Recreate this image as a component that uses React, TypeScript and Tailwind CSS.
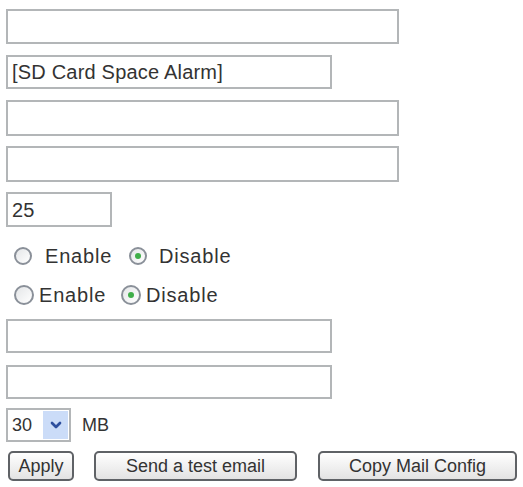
import { ChevronDown } from 'lucide-react'

const font = { fontFamily: '"Liberation Sans", Arial, sans-serif' }

function TextBox({ w, h = 'h-[35px]', value = '' }: { w: string; h?: string; value?: string }) {
  return (
    <div
      className={`${w} ${h} flex items-center border-2 border-[#b3b6b8] bg-white px-[4px] text-[20px] tracking-[0.2px] text-[#333]`}
    >
      {value}
    </div>
  )
}

function Radio({ checked, big }: { checked?: boolean; big?: boolean }) {
  return (
    <span
      className={`flex ${big ? 'size-[20px]' : 'size-[18px]'} items-center justify-center rounded-full border-2 border-[#8a9099] bg-gradient-to-br from-[#e4e6e8] to-white`}
    >
      {checked && <span className="size-[6px] rounded-full bg-[#3fae49]" />}
    </span>
  )
}

function RadioRow({ wide }: { wide?: boolean }) {
  return (
    <div className="flex items-center text-[20px] tracking-[0.8px] text-[#333]">
      <span className={wide ? 'ml-[8px]' : 'ml-[8px]'}>
        <Radio big={!wide} />
      </span>
      <span className={wide ? 'ml-[13px]' : 'ml-[5px]'}>Enable</span>
      <span className={wide ? 'ml-[17px]' : 'ml-[15px]'}>
        <Radio checked big={!wide} />
      </span>
      <span className={wide ? 'ml-[12px]' : 'ml-[5px]'}>Disable</span>
    </div>
  )
}

function Button({ label, w }: { label: string; w: string }) {
  return (
    <button
      className={`${w} h-[30px] rounded-[5px] border-2 border-[#5f6266] bg-gradient-to-b from-white to-[#e3e3e3] text-[18px] text-[#333]`}
    >
      {label}
    </button>
  )
}

export default function App() {
  return (
    <div className="h-[487px] w-[523px] bg-white pl-[6px] pt-[9px]" style={font}>
      <div className="flex flex-col">
        <TextBox w="w-[393px]" />
        <div className="mt-[11px]">
          <TextBox w="w-[326px]" h="h-[34px]" value="[SD Card Space Alarm]" />
        </div>
        <div className="mt-[11px]">
          <TextBox w="w-[393px]" h="h-[36px]" />
        </div>
        <div className="mt-[10px]">
          <TextBox w="w-[393px]" h="h-[36px]" />
        </div>
        <div className="mt-[10px]">
          <TextBox w="w-[106px]" value="25" />
        </div>
        <div className="mt-[16px] flex h-[26px] items-center">
          <RadioRow wide />
        </div>
        <div className="mt-[13px] flex h-[26px] items-center">
          <RadioRow />
        </div>
        <div className="mt-[11px]">
          <TextBox w="w-[326px]" h="h-[34px]" />
        </div>
        <div className="mt-[12px]">
          <TextBox w="w-[326px]" h="h-[34px]" />
        </div>
        <div className="mt-[9px] flex items-center">
          <div className="flex h-[34px] w-[65px] items-center border-2 border-[#b3b6b8] bg-white pl-[4px] pr-[1px] text-[18px] text-[#333]">
            <span className="flex-1">30</span>
            <span className="flex h-[28px] w-[25px] items-center justify-center bg-[#cbdcf8]">
              <ChevronDown className="size-[16px] text-[#2d4f9e]" strokeWidth={4} />
            </span>
          </div>
          <span className="ml-[11px] text-[18px] text-[#333]">MB</span>
        </div>
        <div className="mt-[9px] flex items-center">
          <span className="ml-[2px]">
            <Button label="Apply" w="w-[66px]" />
          </span>
          <span className="ml-[20px]">
            <Button label="Send a test email" w="w-[203px]" />
          </span>
          <span className="ml-[21px]">
            <Button label="Copy Mail Config" w="w-[199px]" />
          </span>
        </div>
      </div>
    </div>
  )
}
